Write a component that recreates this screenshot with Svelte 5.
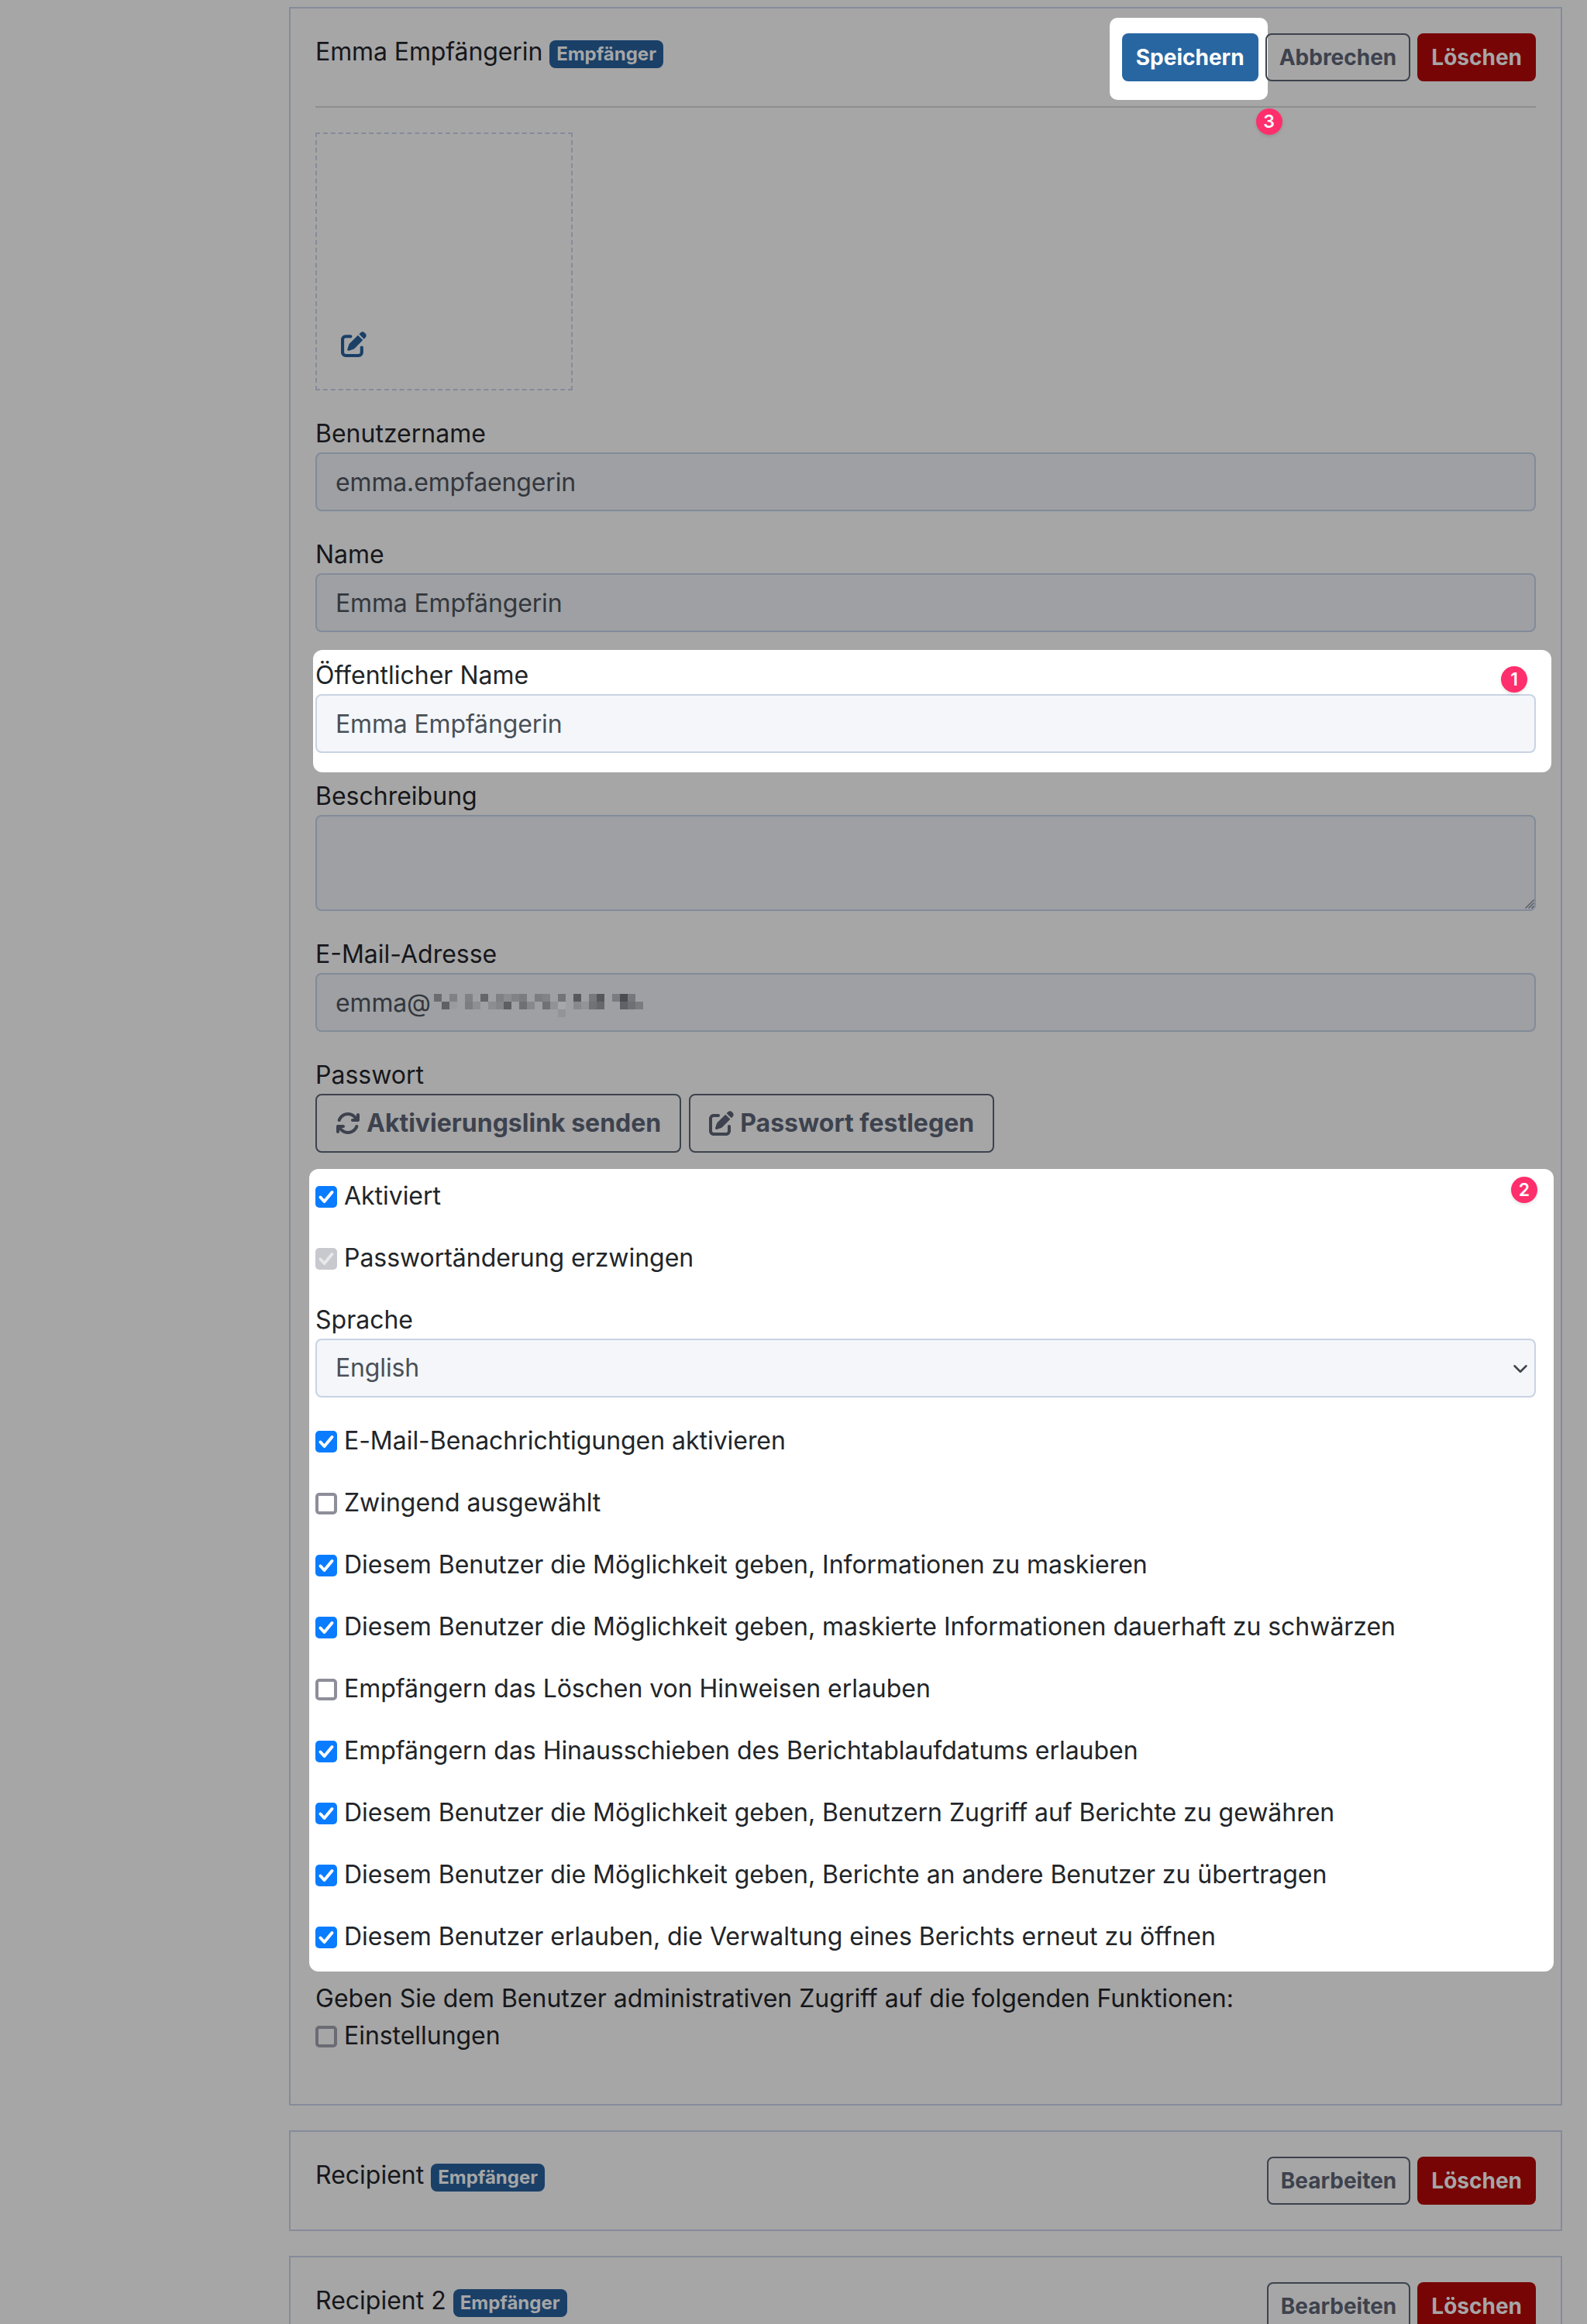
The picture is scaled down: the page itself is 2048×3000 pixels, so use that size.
<script lang="ts">
	// Permission rows inside the second highlighted area
	const topChecks = [
		{ label: 'Aktiviert', checked: true },
		{ label: 'Passwortänderung erzwingen', checked: true, disabled: true }
	];

	const permissions = [
		{ label: 'E-Mail-Benachrichtigungen aktivieren', checked: true },
		{ label: 'Zwingend ausgewählt', checked: false },
		{ label: 'Diesem Benutzer die Möglichkeit geben, Informationen zu maskieren', checked: true },
		{ label: 'Diesem Benutzer die Möglichkeit geben, maskierte Informationen dauerhaft zu schwärzen', checked: true },
		{ label: 'Empfängern das Löschen von Hinweisen erlauben', checked: false },
		{ label: 'Empfängern das Hinausschieben des Berichtablaufdatums erlauben', checked: true },
		{ label: 'Diesem Benutzer die Möglichkeit geben, Benutzern Zugriff auf Berichte zu gewähren', checked: true },
		{ label: 'Diesem Benutzer die Möglichkeit geben, Berichte an andere Benutzer zu übertragen', checked: true },
		{ label: 'Diesem Benutzer erlauben, die Verwaltung eines Berichts erneut zu öffnen', checked: true }
	];

	const recipients = ['Recipient', 'Recipient 2'];

	// Mosaic over the e-mail domain: [column, row, colour]
	const mosaic: [number, number, string][] = [
		[1, 0, '#6b6c70'], [3, 0, '#808184'], [5, 0, '#808184'], [7, 0, '#65666a'],
		[9, 0, '#7f8084'], [10, 0, '#8c8d90'], [11, 0, '#818286'], [12, 0, '#7b7c80'],
		[14, 0, '#7c7d81'], [15, 0, '#828387'], [17, 0, '#737478'], [19, 0, '#58595d'],
		[21, 0, '#77787c'], [22, 0, '#56575b'], [24, 0, '#7b7c80'], [25, 0, '#4b4c52'],
		[26, 0, '#77787c'],
		[2, 1, '#5f6064'], [3, 1, '#9a9b9e'], [5, 1, '#7c7d81'], [6, 1, '#8e8f92'],
		[8, 1, '#8c8d90'], [9, 1, '#85868a'], [10, 1, '#5e5f63'], [12, 1, '#6f7074'],
		[13, 1, '#87888c'], [15, 1, '#707175'], [16, 1, '#919295'], [17, 1, '#a6a7aa'],
		[19, 1, '#88898c'], [20, 1, '#939497'], [21, 1, '#717276'], [22, 1, '#67686c'],
		[25, 1, '#5f6266'], [26, 1, '#6f7074'], [27, 1, '#7b7c80'],
		[17, 2, '#939497']
	];

	const penPath =
		'M471.6 21.7c-21.9-21.9-57.3-21.9-79.2 0L362.3 51.7l97.9 97.9 30.1-30.1c21.9-21.9 21.9-57.3 0-79.2L471.6 21.7zm-299.2 220c-6.1 6.1-10.8 13.6-13.5 21.9l-29.6 88.8c-2.9 8.6-.6 18.1 5.8 24.6s15.9 8.7 24.6 5.8l88.8-29.6c8.2-2.7 15.7-7.4 21.9-13.5L437.7 172.3 339.7 74.3 172.4 241.7zM96 64C43 64 0 107 0 160V416c0 53 43 96 96 96H352c53 0 96-43 96-96V320c0-17.7-14.3-32-32-32s-32 14.3-32 32v96c0 17.7-14.3 32-32 32H96c-17.7 0-32-14.3-32-32V160c0-17.7 14.3-32 32-32h96c17.7 0 32-14.3 32-32s-14.3-32-32-32H96z';
	const rotatePath =
		'M105.1 202.6c7.7-21.8 20.2-42.3 37.8-59.8c62.5-62.5 163.8-62.5 226.3 0L386.3 160H352c-17.7 0-32 14.3-32 32s14.3 32 32 32H463.5c0 0 0 0 0 0h.4c17.7 0 32-14.3 32-32V80c0-17.7-14.3-32-32-32s-32 14.3-32 32v35.2L414.4 97.6c-87.5-87.5-229.3-87.5-316.8 0C73.2 122 55.6 150.7 44.8 181.4c-5.9 16.7 2.9 34.9 19.5 40.8s34.9-2.9 40.8-19.5zM39 289.3c-5 1.5-9.8 4.2-13.7 8.2c-4 4-6.7 8.8-8.1 14c-.3 1.2-.6 2.5-.8 3.8c-.3 1.7-.4 3.4-.4 5.1V432c0 17.7 14.3 32 32 32s32-14.3 32-32V396.9l17.6 17.5 0 0c87.5 87.4 229.3 87.4 316.7 0c24.4-24.4 42.1-53.1 52.9-83.7c5.9-16.7-2.9-34.9-19.5-40.8s-34.9 2.9-40.8 19.5c-7.7 21.8-20.2 42.3-37.8 59.8c-62.5 62.5-163.8 62.5-226.3 0l-.1-.1L125.6 352H160c17.7 0 32-14.3 32-32s-14.3-32-32-32H48.4c-1.6 0-3.2 .1-4.8 .3s-3.1 .5-4.6 1z';
</script>

{#snippet check(item: { label: string; checked: boolean; disabled?: boolean })}
	<label class="check">
		<input type="checkbox" checked={item.checked} disabled={item.disabled} />
		<span>{item.label}</span>
	</label>
{/snippet}

<div class="page">
	<section class="card">
		<header class="card-head ruled">
			<h2 class="tight">Emma Empfängerin <span class="badge">Empfänger</span></h2>
			<div class="actions">
				<div class="spot-save">
					<button type="button" class="btn primary">Speichern</button>
					<span class="step step-3">3</span>
				</div>
				<button type="button" class="btn outline">Abbrechen</button>
				<button type="button" class="btn danger">Löschen</button>
			</div>
		</header>

		<div class="avatar">
			<svg class="avatar-icon" viewBox="0 0 512 512" aria-hidden="true"><path d={penPath} /></svg>
		</div>

		<div class="group">
			<label for="username">Benutzername</label>
			<input id="username" class="control" value="emma.empfaengerin" readonly />
		</div>

		<div class="group">
			<label for="name">Name</label>
			<input id="name" class="control" value="Emma Empfängerin" readonly />
		</div>

		<div class="group spot spot-name">
			<label for="public-name">Öffentlicher Name</label>
			<input id="public-name" class="control" value="Emma Empfängerin" />
			<span class="step step-1">1</span>
		</div>

		<div class="group">
			<label for="description">Beschreibung</label>
			<div class="area-wrap">
				<textarea id="description" class="control area" readonly></textarea>
				<svg class="grip" width="12" height="12" viewBox="0 0 12 12" aria-hidden="true">
					<path d="M0.5 11.5L11.5 0.5M4.5 11.5L11.5 4.5M8.5 11.5L11.5 8.5" stroke="#55585f" stroke-width="1.4" fill="none" />
				</svg>
			</div>
		</div>

		<div class="group">
			<label for="email">E-Mail-Adresse</label>
			<div class="email">
				<input id="email" class="control" value="emma@" readonly />
				<svg class="mosaic" width="280" height="30" viewBox="0 0 280 30" aria-hidden="true">
					{#each mosaic as [col, row, colour]}
						<rect x={col * 10} y={row * 10} width="10" height="10" fill={colour} />
					{/each}
				</svg>
			</div>
		</div>

		<div class="group">
			<div class="label">Passwort</div>
			<div class="password-actions">
				<button type="button" class="btn outline large">
					<svg class="btn-icon" viewBox="0 0 512 512" aria-hidden="true"><path d={rotatePath} /></svg>
					Aktivierungslink senden
				</button>
				<button type="button" class="btn outline large">
					<svg class="btn-icon" viewBox="0 0 512 512" aria-hidden="true"><path d={penPath} /></svg>
					Passwort festlegen
				</button>
			</div>
		</div>

		<div class="spot spot-settings">
			<span class="step step-2">2</span>
			{#each topChecks as item}
				<div class="group">{@render check(item)}</div>
			{/each}

			<div class="group">
				<label for="language">Sprache</label>
				<div class="select">
					<select id="language" class="control">
						<option>English</option>
					</select>
					<svg class="chevron" viewBox="0 0 16 16" aria-hidden="true">
						<path d="M2 5l6 6 6-6" fill="none" stroke="#3f454c" stroke-width="2" stroke-linecap="round" stroke-linejoin="round" />
					</svg>
				</div>
			</div>

			{#each permissions as item}
				<div class="group">{@render check(item)}</div>
			{/each}
		</div>

		<div class="group">
			<div class="label">Geben Sie dem Benutzer administrativen Zugriff auf die folgenden Funktionen:</div>
			{@render check({ label: 'Einstellungen', checked: false })}
		</div>
	</section>

	{#each recipients as name}
		<section class="card">
			<header class="card-head">
				<h2>{name} <span class="badge">Empfänger</span></h2>
				<div class="actions">
					<button type="button" class="btn outline">Bearbeiten</button>
					<button type="button" class="btn danger">Löschen</button>
				</div>
			</header>
		</section>
	{/each}
</div>

<style>
	:global(body) {
		background: #a6a6a6;
		font-family: Inter, 'Liberation Sans', sans-serif;
	}

	.page {
		height: 3000px;
		box-sizing: border-box;
		overflow: hidden;
		padding: 9px 32px 0 373px;
		font-size: 32px;
		line-height: 48px;
		color: #16171b;
	}

	.card {
		border: 2px solid #858b9a;
		padding: 32px;
		margin-bottom: 32px;
	}

	.card-head {
		display: flex;
		justify-content: space-between;
		align-items: flex-start;
	}

	.card-head.ruled {
		padding-bottom: 32px;
		border-bottom: 2px solid #8d8e90;
		margin-bottom: 32px;
	}

	h2 {
		margin: 0;
		font-size: 32px;
		line-height: 48px;
		font-weight: 400;
	}

	h2.tight {
		letter-spacing: -0.1px;
	}

	.badge {
		display: inline-block;
		padding: 6px 9px;
		border-radius: 8px;
		background: #1a4068;
		color: #a6a6a6;
		font-size: 24px;
		line-height: 24px;
		font-weight: 700;
		letter-spacing: 0;
	}

	.actions {
		display: flex;
		gap: 9px;
	}

	.btn {
		box-sizing: border-box;
		padding: 8px 16px;
		border: 2px solid transparent;
		border-radius: 8px;
		font-family: inherit;
		font-size: 28px;
		line-height: 42px;
		font-weight: 700;
		white-space: nowrap;
	}

	.btn.primary {
		display: block;
		background: #2866a2;
		color: #fff;
	}

	.btn.outline {
		position: relative;
		background: transparent;
		border-color: #3d424e;
		color: #3d424e;
	}

	.btn.danger {
		background: #770505;
		color: #a6a6a6;
	}

	.btn.large {
		display: flex;
		align-items: center;
		gap: 8px;
		padding: 12px 24px;
		font-size: 32px;
		line-height: 48px;
	}

	.btn-icon {
		width: 32px;
		height: 32px;
		fill: #3d424e;
	}

	.spot-save {
		position: relative;
		margin: -20px -12px -24px -16px;
		padding: 20px 12px 24px 16px;
		background: #fff;
		border-radius: 10px;
	}

	.avatar {
		box-sizing: border-box;
		display: flex;
		align-items: flex-end;
		width: 332px;
		height: 333px;
		padding: 0 0 41px 31px;
		margin-bottom: 32px;
		border: 2px dashed #858b9a;
	}

	.avatar-icon {
		width: 33px;
		height: 33px;
		fill: #1a4068;
	}

	.group {
		margin-bottom: 32px;
	}

	.group > label:not(.check),
	.label {
		display: block;
	}

	.control {
		display: block;
		box-sizing: border-box;
		width: 100%;
		height: 76px;
		padding: 12px 24px;
		border: 2px solid #828b99;
		border-radius: 8px;
		background: #9ea0a3;
		color: #33373d;
		font-family: inherit;
		font-size: 32px;
		line-height: 48px;
		letter-spacing: -0.15px;
		outline: none;
	}

	.area {
		height: 124px;
		resize: none;
	}

	.area-wrap {
		position: relative;
	}

	.grip {
		position: absolute;
		right: 2px;
		bottom: 3px;
	}

	.email {
		position: relative;
	}

	.mosaic {
		position: absolute;
		left: 143px;
		top: 27px;
	}

	.password-actions {
		display: flex;
		gap: 10px;
	}

	.spot {
		position: relative;
		background: #fff;
		border-radius: 12px;
		color: #212529;
	}

	.spot .control {
		border-color: #c8d3e3;
		background: #f4f6fa;
		color: #495057;
	}

	.spot-name {
		margin: -9px -20px 7px -3px;
		padding: 9px 20px 25px 3px;
	}

	.spot-settings {
		margin: -11px -23px 11px -8px;
		padding: 11px 23px 21px 8px;
	}

	.spot-settings > .group:last-child {
		margin-bottom: 0;
	}

	.step {
		position: absolute;
		display: flex;
		align-items: center;
		justify-content: center;
		width: 34px;
		height: 34px;
		border-radius: 50%;
		background: #ff2e6c;
		box-shadow: 0 2px 4px rgba(0, 0, 0, 0.12);
		color: #fff;
		font-size: 23px;
		line-height: 34px;
		font-weight: 600;
	}

	.step-1 {
		top: 21px;
		right: 31px;
	}

	.step-2 {
		top: 10px;
		right: 21px;
	}

	.step-3 {
		top: 117px;
		right: -19px;
	}

	.select {
		position: relative;
	}

	select.control {
		appearance: none;
	}

	.chevron {
		position: absolute;
		right: 10px;
		top: 29px;
		width: 20px;
		height: 20px;
	}

	.check {
		display: flex;
		align-items: center;
		gap: 9px;
		letter-spacing: -0.04px;
	}

	.check input {
		appearance: none;
		box-sizing: border-box;
		flex: none;
		width: 28px;
		height: 28px;
		margin: 2px 0 0;
		border: 4px solid #8e8e9a;
		border-radius: 5px;
		background: transparent;
	}

	.check input:checked {
		border: 0;
		background: #0a7cff url("data:image/svg+xml,%3Csvg xmlns='http://www.w3.org/2000/svg' viewBox='0 0 28 28'%3E%3Cpath d='M6.5 14.5l5 5.5 10-12' fill='none' stroke='%23fff' stroke-width='4' stroke-linecap='round' stroke-linejoin='round'/%3E%3C/svg%3E");
	}

	.check input:disabled {
		background: #c8c9ce url("data:image/svg+xml,%3Csvg xmlns='http://www.w3.org/2000/svg' viewBox='0 0 28 28'%3E%3Cpath d='M6.5 14.5l5 5.5 10-12' fill='none' stroke='%23e8e8ea' stroke-width='4' stroke-linecap='round' stroke-linejoin='round'/%3E%3C/svg%3E");
	}

	.card > .group:last-child .check input {
		border-color: #6b6b74;
	}
</style>
